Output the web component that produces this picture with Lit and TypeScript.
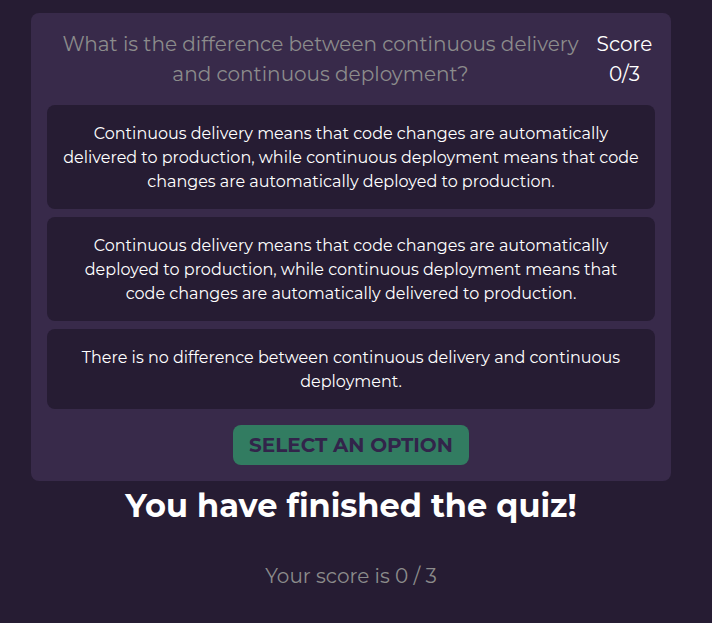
import { LitElement, html, css } from "lit";
import { customElement, state } from "lit/decorators.js";

@customElement("app-root")
export class AppRoot extends LitElement {
  static styles = css`
    :host {
      display: block;
      box-sizing: border-box;
      min-height: 100vh;
      padding: 13px 41px 32px 31px;
      background: #261c33;
      color: #fff;
      font-family: Montserrat, Inter, "Open Sans", sans-serif;
      font-size: 16px;
      line-height: 24px;
      text-align: center;
    }
    .card {
      max-width: 640px;
      box-sizing: border-box;
      margin: 0 auto;
      padding: 16px;
      border-radius: 8px;
      background: #382a4a;
    }
    .header {
      display: grid;
      grid-template-columns: 1fr 61px;
      margin-bottom: 16px;
    }
    .question,
    .score,
    .result {
      margin: 0;
      font-size: 20px;
      font-weight: 400;
      line-height: 30px;
    }
    .question {
      padding: 0 8px;
    }
    .question,
    .result {
      color: #8c8c8c;
    }
    .options {
      display: grid;
      gap: 8px;
      margin-bottom: 16px;
    }
    button {
      border: 0;
      border-radius: 8px;
      font: inherit;
      cursor: pointer;
    }
    .option {
      padding: 17px 16px 15px;
      background: #261c33;
      color: #fff;
    }
    .submit {
      padding: 5px 16px;
      background: #327c61;
      color: #32244a;
      font-size: 20px;
      font-weight: 700;
      line-height: 30px;
    }
    .finished {
      margin: 0 0 30px;
      font-size: 32px;
      font-weight: 700;
      line-height: 50px;
    }
  `;

  @state() private score = 0;
  private total = 3;
  private options = [
    "Continuous delivery means that code changes are automatically delivered to production, while continuous deployment means that code changes are automatically deployed to production.",
    "Continuous delivery means that code changes are automatically deployed to production, while continuous deployment means that code changes are automatically delivered to production.",
    "There is no difference between continuous delivery and continuous deployment.",
  ];

  render() {
    return html`
      <section class="card">
        <div class="header">
          <h2 class="question">What is the difference between continuous delivery and continuous deployment?</h2>
          <p class="score">Score ${this.score}/${this.total}</p>
        </div>
        <div class="options">
          ${this.options.map((text) => html`<button class="option" type="button">${text}</button>`)}
        </div>
        <button class="submit" type="button">SELECT AN OPTION</button>
      </section>
      <h1 class="finished">You have finished the quiz!</h1>
      <p class="result">Your score is ${this.score} / ${this.total}</p>
    `;
  }
}
